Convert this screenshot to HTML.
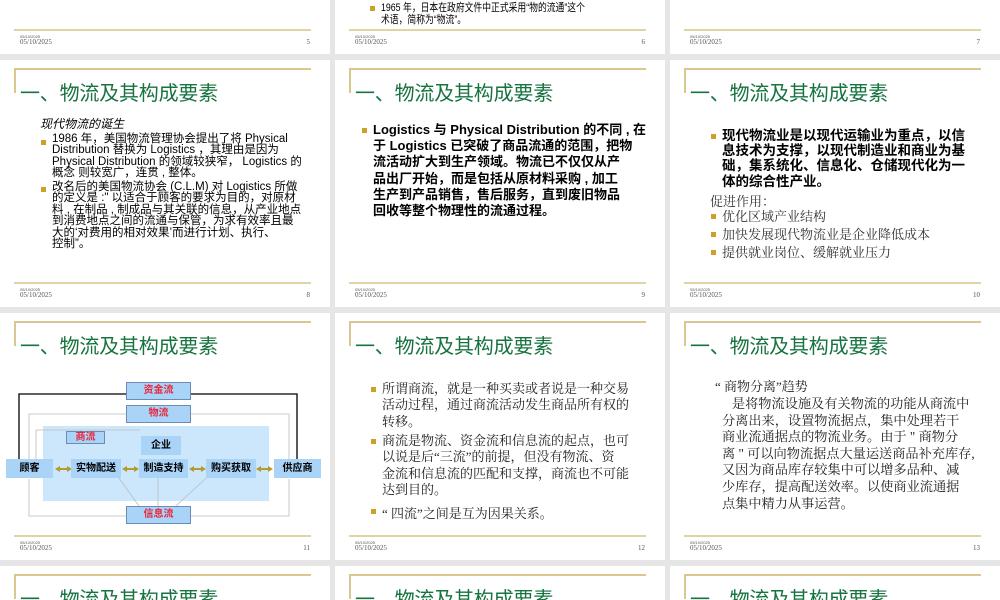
<!DOCTYPE html>
<html><head><meta charset="utf-8"><style>
*{margin:0;padding:0;box-sizing:border-box}
html,body{width:1000px;height:600px;overflow:hidden}
body{background:#e6e6e6;position:relative;font-family:"Liberation Sans","Noto Sans CJK SC",sans-serif;color:#000}
.s{position:absolute;width:330px;height:247px;background:#fff;overflow:hidden}
.tl{position:absolute;left:14px;top:8px;width:297px;height:1.5px;background:#d9c78f}
.vl{position:absolute;left:14px;top:8px;width:1.5px;height:25px;background:#d9c78f}
.ti{position:absolute;left:20px;top:17px;font-size:20px;color:#17733f;font-family:"Liberation Sans","Noto Sans CJK SC",sans-serif;white-space:nowrap;letter-spacing:-0.2px}
.fl{position:absolute;left:14px;top:222px;width:297px;height:1.5px;background:#e0d3a6}
.d1{position:absolute;left:20px;top:227px;font-size:4px;color:#555}
.d2{position:absolute;left:20px;top:231px;font-size:7px;color:#555;font-family:"Liberation Serif",serif}
.pn{position:absolute;right:20px;top:231px;font-size:7px;color:#555;font-family:"Liberation Serif",serif}
.t{position:absolute;white-space:nowrap}
.b{position:absolute;width:5px;height:5px;background:#c9a227}
.bx{position:absolute;background:#a9d3f7;border:1px solid #6b8cb5;font-size:10px;text-align:center;font-family:"Liberation Sans","Noto Sans CJK SC",sans-serif;font-weight:bold}
.r{color:#e8263c}
.sr{font-family:"Liberation Serif","Noto Serif CJK SC",serif}
</style></head><body>

<!-- row 1 -->
<div class="s" style="left:0;top:-193px"><div class="fl"></div><div class="d1">05/10/2025</div><div class="d2">05/10/2025</div><div class="pn">5</div></div>
<div class="s" style="left:335px;top:-193px">
<div class="b" style="left:35px;top:199px"></div>
<div class="t" style="left:46px;top:195px;font-size:11px;line-height:12px;transform:scaleX(0.8);transform-origin:0 0">1965 年，日本在政府文件中正式采用“物的流通”这个<br>术语，简称为“物流”。</div>
<div class="fl"></div><div class="d1">05/10/2025</div><div class="d2">05/10/2025</div><div class="pn">6</div></div>
<div class="s" style="left:670px;top:-193px"><div class="fl"></div><div class="d1">05/10/2025</div><div class="d2">05/10/2025</div><div class="pn">7</div></div>

<!-- row 2 -->
<div class="s" style="left:0;top:60px">
<div class="tl"></div><div class="vl"></div><div class="ti">一、物流及其构成要素</div>
<div class="t" style="left:40px;top:55px;font-size:12px;font-style:italic">现代物流的诞生</div>
<div class="b" style="left:41px;top:80px"></div>
<div class="t" style="left:52px;top:74px;font-size:11.5px;line-height:11.4px">1986 年，美国物流管理协会提出了将 Physical<br>Distribution 替换为 Logistics ，其理由是因为<br>Physical Distribution 的领域较狭窄， Logistics 的<br>概念 则较宽广，连贯 , 整体。</div>
<div class="b" style="left:41px;top:127px"></div>
<div class="t" style="left:52px;top:122px;font-size:11.5px;line-height:11.4px">改名后的美国物流协会 (C.L.M) 对 Logistics  所做<br>的定义是 :" 以适合于顾客的要求为目的，对原材<br>料 , 在制品 , 制成品与其关联的信息，从产业地点<br>到消费地点之间的流通与保管，为求有效率且最<br>大的‘对费用的相对效果’而进行计划、执行、<br>控制”。</div>
<div class="fl"></div><div class="d1">05/10/2025</div><div class="d2">05/10/2025</div><div class="pn">8</div></div>

<div class="s" style="left:335px;top:60px">
<div class="tl"></div><div class="vl"></div><div class="ti">一、物流及其构成要素</div>
<div class="b" style="left:27px;top:68px"></div>
<div class="t" style="left:38px;top:62px;font-size:13px;line-height:16.2px;font-weight:bold">Logistics 与 Physical Distribution 的不同 , 在<br>于 Logistics 已突破了商品流通的范围，把物<br>流活动扩大到生产领域。物流已不仅仅从产<br>品出厂开始，而是包括从原材料采购 , 加工<br>生产到产品销售，售后服务，直到废旧物品<br>回收等整个物理性的流通过程。</div>
<div class="fl"></div><div class="d1">05/10/2025</div><div class="d2">05/10/2025</div><div class="pn">9</div></div>

<div class="s" style="left:670px;top:60px">
<div class="tl"></div><div class="vl"></div><div class="ti">一、物流及其构成要素</div>
<div class="b" style="left:41px;top:74px"></div>
<div class="t" style="left:52px;top:68px;font-size:13.5px;line-height:15.2px;font-weight:bold">现代物流业是以现代运输业为重点，以信<br>息技术为支撑，以现代制造业和商业为基<br>础，集系统化、信息化、仓储现代化为一<br>体的综合性产业。</div>
<div class="t sr" style="left:40px;top:131px;font-size:13px;color:#333">促进作用：</div>
<div class="b" style="left:41px;top:154px"></div>
<div class="t sr" style="left:52px;top:148px;font-size:13px;line-height:18px;color:#333">优化区域产业结构<br>加快发展现代物流业是企业降低成本<br>提供就业岗位、缓解就业压力</div>
<div class="b" style="left:41px;top:172px"></div>
<div class="b" style="left:41px;top:190px"></div>
<div class="fl"></div><div class="d1">05/10/2025</div><div class="d2">05/10/2025</div><div class="pn">10</div></div>

<!-- row 3 -->
<div class="s" style="left:0;top:313px">
<div class="tl"></div><div class="vl"></div><div class="ti">一、物流及其构成要素</div>
<svg style="position:absolute;left:0;top:0" width="330" height="247">
<rect x="43" y="113" width="226" height="75" fill="#cce7fb"/>
<g stroke="#000" stroke-width="1.3" fill="none"><path d="M19 146V81H126M191 81H297V146"/></g>
<g stroke="#bbb" stroke-width="0.8" fill="none"><path d="M29 146V101H126M191 101H289V146M36 146V117H140M29 166V203H126M191 203H289V166M111 154L139 193M158 154V193M218 154L176 193"/></g>
<g fill="#b59a2d"><path d="M55 156l5-3v2h7v-2l5 3-5 3v-2h-7v2z"/><path d="M122 156l5-3v2h7v-2l5 3-5 3v-2h-7v2z"/><path d="M189 156l5-3v2h7v-2l5 3-5 3v-2h-7v2z"/><path d="M256 156l5-3v2h7v-2l5 3-5 3v-2h-7v2z"/></g>
</svg>
<div class="bx r" style="left:126px;top:69px;width:65px;height:18px;line-height:16px">资金流</div>
<div class="bx r" style="left:126px;top:92px;width:65px;height:18px;line-height:16px">物流</div>
<div class="bx r" style="left:66px;top:118px;width:39px;height:13px;line-height:11px">商流</div>
<div class="bx" style="left:141px;top:123px;width:40px;height:19px;line-height:17px;border-color:#a9d3f7">企业</div>
<div class="bx" style="left:6px;top:146px;width:47px;height:19px;line-height:17px;border-color:#a9d3f7">顾客</div>
<div class="bx" style="left:71px;top:146px;width:50px;height:19px;line-height:17px;border-color:#a9d3f7">实物配送</div>
<div class="bx" style="left:139px;top:146px;width:49px;height:19px;line-height:17px;border-color:#a9d3f7">制造支持</div>
<div class="bx" style="left:206px;top:146px;width:50px;height:19px;line-height:17px;border-color:#a9d3f7">购买获取</div>
<div class="bx" style="left:274px;top:146px;width:47px;height:19px;line-height:17px;border-color:#a9d3f7">供应商</div>
<div class="bx r" style="left:126px;top:193px;width:65px;height:18px;line-height:16px">信息流</div>
<div class="fl"></div><div class="d1">05/10/2025</div><div class="d2">05/10/2025</div><div class="pn">11</div></div>

<div class="s" style="left:335px;top:313px">
<div class="tl"></div><div class="vl"></div><div class="ti">一、物流及其构成要素</div>
<div class="b" style="left:36px;top:74px"></div>
<div class="t sr" style="left:47px;top:68px;font-size:13px;line-height:16.3px;color:#222">所谓商流，就是一种买卖或者说是一种交易<br>活动过程，通过商流活动发生商品所有权的<br>转移。</div>
<div class="b" style="left:36px;top:126px"></div>
<div class="t sr" style="left:47px;top:120px;font-size:13px;line-height:16.3px;color:#222">商流是物流、资金流和信息流的起点，也可<br>以说是后“三流”的前提，但没有物流、资<br>金流和信息流的匹配和支撑，商流也不可能<br>达到目的。</div>
<div class="b" style="left:36px;top:196px"></div>
<div class="t sr" style="left:47px;top:190px;font-size:13px;color:#222">“ 四流”之间是互为因果关系。</div>
<div class="fl"></div><div class="d1">05/10/2025</div><div class="d2">05/10/2025</div><div class="pn">12</div></div>

<div class="s" style="left:670px;top:313px">
<div class="tl"></div><div class="vl"></div><div class="ti">一、物流及其构成要素</div>
<div class="t sr" style="left:45px;top:63px;font-size:13px;color:#222">“ 商物分离”趋势</div>
<div class="t sr" style="left:52px;top:83px;font-size:13.2px;line-height:16.6px;color:#222">&nbsp;&nbsp;&nbsp;是将物流设施及有关物流的功能从商流中<br>分离出来，设置物流据点，集中处理若干<br>商业流通据点的物流业务。由于 " 商物分<br>离 " 可以向物流据点大量运送商品补充库存,<br>又因为商品库存较集中可以增多品种、减<br>少库存，提高配送效率。以使商业流通据<br>点集中精力从事运营。</div>
<div class="fl"></div><div class="d1">05/10/2025</div><div class="d2">05/10/2025</div><div class="pn">13</div></div>

<!-- row 4 -->
<div class="s" style="left:0;top:566px;height:34px"><div class="tl"></div><div class="vl"></div><div class="ti">一、物流及其构成要素</div></div>
<div class="s" style="left:335px;top:566px;height:34px"><div class="tl"></div><div class="vl"></div><div class="ti">一、物流及其构成要素</div></div>
<div class="s" style="left:670px;top:566px;height:34px"><div class="tl"></div><div class="vl"></div><div class="ti">一、物流及其构成要素</div></div>
</body></html>
